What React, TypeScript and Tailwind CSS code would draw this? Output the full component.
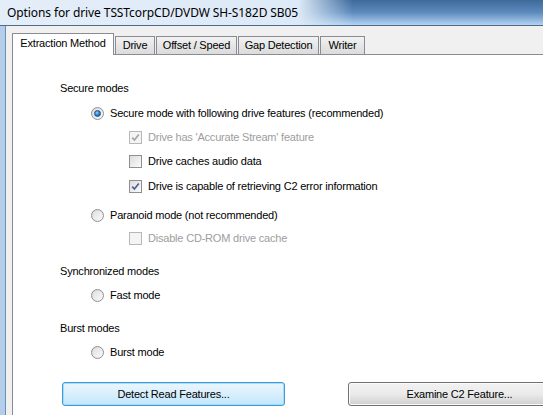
import React from 'react';

const tabs = [
  { label: 'Drive', w: 'w-[40px]' },
  { label: 'Offset / Speed', w: 'w-[81px]' },
  { label: 'Gap Detection', w: 'w-[81px]' },
  { label: 'Writer', w: 'w-[45px]' },
];

const Radio = ({ checked = false }: { checked?: boolean }) => (
  <span className="relative flex h-[13px] w-[13px] shrink-0 items-center justify-center rounded-full border border-[#8f9296] bg-gradient-to-br from-[#d4d4d4] to-[#fbfbfb]">
    <span className="h-[9px] w-[9px] rounded-full bg-gradient-to-br from-[#e2e2e2] to-[#f7f7f7]" />
    {checked && (
      <span className="absolute h-[7px] w-[7px] rounded-full border border-[#1d4e86] bg-[radial-gradient(circle_at_40%_35%,#8fd8ff_0%,#2f8bd4_45%,#124f8e_100%)]" />
    )}
  </span>
);

const Check = ({ checked = false, disabled = false }: { checked?: boolean; disabled?: boolean }) => (
  <span
    className={
      disabled
        ? 'relative flex h-[13px] w-[13px] shrink-0 items-center justify-center border border-[#b8b8b8] bg-[#f4f4f4]'
        : 'relative flex h-[13px] w-[13px] shrink-0 items-center justify-center border border-[#8f8f8f] bg-gradient-to-br from-[#dcdcdc] to-[#fbfbfb]'
    }
  >
    {checked && (
      <svg width="9" height="9" viewBox="0 0 9 9" className="absolute">
        <path
          d="M1.2 4.6 L3.4 7 L7.8 1.4"
          fill="none"
          stroke={disabled ? '#a4a4a4' : '#4a5f9c'}
          strokeWidth="1.6"
        />
      </svg>
    )}
  </span>
);

export default function App() {
  return (
    <div className="relative flex h-[415px] w-[543px] flex-col overflow-hidden bg-[#f0f0f0] font-['Liberation_Sans',Arial,sans-serif] text-[11px] tracking-[-0.2px] text-black">
      {/* Title bar */}
      <div className="relative h-[26px] shrink-0 border-b border-[#4f6b8c] bg-gradient-to-b from-[#3d6a9b] via-[#5d8bbd] to-[#b4d3f2]">
        <div className="absolute inset-0 bg-gradient-to-r from-[#e4eef9] via-[#dce9f6] via-55% to-transparent to-65%" />
        <div className="relative flex h-full items-center pl-[7px] font-['Noto_Sans',sans-serif] text-[12px] tracking-[-0.1px] text-black">
          Options for drive TSSTcorpCD/DVDW SH-S182D SB05
        </div>
      </div>

      <div className="flex flex-1">
        {/* Window frame left */}
        <div className="w-[6px] shrink-0 border-r border-[#6d8fb4] bg-[#b3cdea]" />

        <div className="flex flex-1 flex-col pl-[6px] pt-[7px]">
          {/* Tabs */}
          <div className="flex items-end">
            <div className="relative z-10 -mb-px flex h-[22px] w-[102px] items-center justify-center border border-b-0 border-[#898c95] bg-white pb-[2px]">
              Extraction Method
            </div>
            {tabs.map((t) => (
              <div
                key={t.label}
                className={`ml-px flex h-[18px] ${t.w} items-center justify-center border border-b-0 border-[#898c95] bg-gradient-to-b from-[#f2f2f2] to-[#dbdbdb]`}
              >
                {t.label}
              </div>
            ))}
          </div>

          {/* Panel */}
          <div className="flex flex-1 flex-col border-l border-t border-[#898c95] bg-white pl-[47px] pt-[21px]">
            <div className="flex h-[24px] items-center">Secure modes</div>

            <div className="ml-[31px] mt-px flex h-[24px] items-center gap-[6px]">
              <Radio checked />
              <span>Secure mode with following drive features (recommended)</span>
            </div>
            <div className="ml-[69px] flex h-[24px] items-center gap-[6px] text-[#9d9d9d]">
              <Check checked disabled />
              <span>Drive has 'Accurate Stream' feature</span>
            </div>
            <div className="ml-[69px] flex h-[24px] items-center gap-[6px]">
              <Check />
              <span>Drive caches audio data</span>
            </div>
            <div className="ml-[69px] mt-px flex h-[24px] items-center gap-[6px]">
              <Check checked />
              <span>Drive is capable of retrieving C2 error information</span>
            </div>

            <div className="ml-[31px] mt-[5px] flex h-[24px] items-center gap-[6px]">
              <Radio />
              <span>Paranoid mode (not recommended)</span>
            </div>
            <div className="ml-[69px] flex h-[23px] items-center gap-[6px] text-[#9d9d9d]">
              <Check disabled />
              <span>Disable CD-ROM drive cache</span>
            </div>

            <div className="mt-[9px] flex h-[24px] items-center">Synchronized modes</div>
            <div className="ml-[31px] flex h-[24px] items-center gap-[6px]">
              <Radio />
              <span>Fast mode</span>
            </div>

            <div className="mt-[9px] flex h-[24px] items-center">Burst modes</div>
            <div className="ml-[31px] flex h-[24px] items-center gap-[6px]">
              <Radio />
              <span>Burst mode</span>
            </div>

            {/* Buttons */}
            <div className="ml-[2px] mt-[18px] flex gap-[63px]">
              <button className="flex h-[24px] w-[223px] shrink-0 items-center justify-center rounded-[3px] border border-[#3c9bd6] bg-gradient-to-b from-[#eaf6fd] via-[#d9effc] via-50% to-[#bee6fd] shadow-[inset_0_0_0_1px_#a9dcf6]">
                Detect Read Features...
              </button>
              <button className="flex h-[24px] w-[223px] shrink-0 items-center justify-center rounded-[3px] border border-[#707070] bg-gradient-to-b from-[#f2f2f2] via-[#ebebeb] via-50% to-[#cfcfcf] shadow-[inset_0_0_0_1px_#fcfcfc]">
                Examine C2 Feature...
              </button>
            </div>
          </div>
        </div>
      </div>
    </div>
  );
}
